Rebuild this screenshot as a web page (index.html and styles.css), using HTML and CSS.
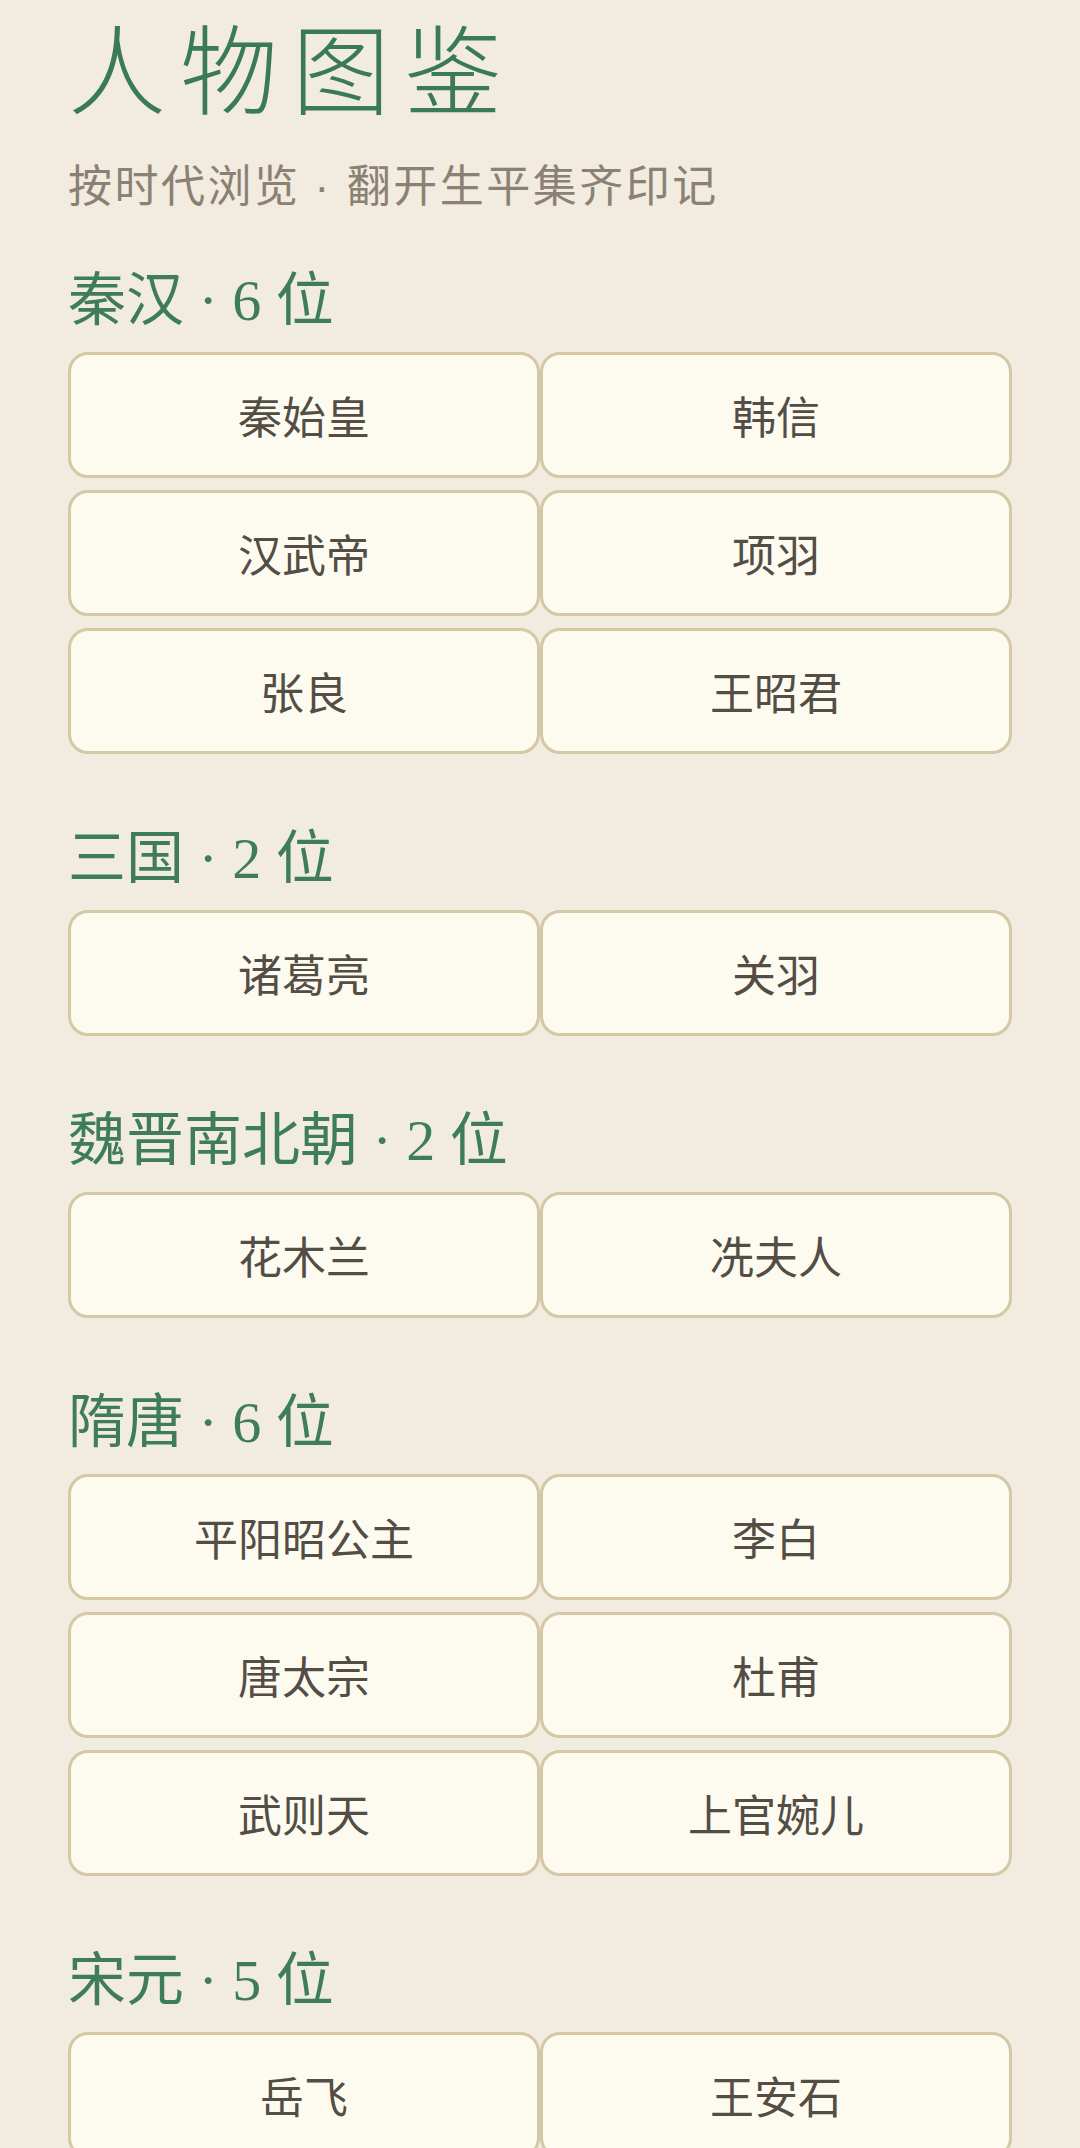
FILE: index.html
```html
<!DOCTYPE html>
<html lang="zh-CN">
<head>
<meta charset="utf-8">
<title>人物图鉴</title>
<link rel="stylesheet" href="styles.css">
</head>
<body>
<main class="page">
  <h1 class="title">人物图鉴</h1>
  <p class="subtitle">按时代浏览<span class="sep">·</span>翻开生平集齐印记</p>

  <section class="era">
    <h2 class="era-title">秦汉 · 6 位</h2>
    <div class="grid">
      <div class="card">秦始皇</div>
      <div class="card">韩信</div>
      <div class="card">汉武帝</div>
      <div class="card">项羽</div>
      <div class="card">张良</div>
      <div class="card">王昭君</div>
    </div>
  </section>

  <section class="era">
    <h2 class="era-title">三国 · 2 位</h2>
    <div class="grid">
      <div class="card">诸葛亮</div>
      <div class="card">关羽</div>
    </div>
  </section>

  <section class="era">
    <h2 class="era-title">魏晋南北朝 · 2 位</h2>
    <div class="grid">
      <div class="card">花木兰</div>
      <div class="card">冼夫人</div>
    </div>
  </section>

  <section class="era">
    <h2 class="era-title">隋唐 · 6 位</h2>
    <div class="grid">
      <div class="card">平阳昭公主</div>
      <div class="card">李白</div>
      <div class="card">唐太宗</div>
      <div class="card">杜甫</div>
      <div class="card">武则天</div>
      <div class="card">上官婉儿</div>
    </div>
  </section>

  <section class="era">
    <h2 class="era-title">宋元 · 5 位</h2>
    <div class="grid">
      <div class="card">岳飞</div>
      <div class="card">王安石</div>
    </div>
  </section>
</main>
</body>
</html>
```
FILE: styles.css
```css
html, body {
  margin: 0;
  padding: 0;
  background: #f1ebe0;
}

.page {
  padding: 25px 68px 0;
  font-family: "Noto Sans CJK SC", "Noto Sans", sans-serif;
}

.title {
  margin: 0;
  font-family: "Liberation Serif", "Noto Sans CJK SC", serif;
  font-size: 98px;
  line-height: 1;
  font-weight: 300;
  letter-spacing: 14px;
  color: #3b7a57;
}

.subtitle {
  margin: 38px 0 0;
  font-size: 44px;
  line-height: 1;
  letter-spacing: 2.5px;
  color: #8b8173;
}

.sep {
  font-family: "Liberation Sans", sans-serif;
  margin: 0 15px 0 14px;
}

.era {
  margin-top: 76px;
}

.subtitle + .era {
  margin-top: 63px;
}

.era-title {
  margin: 0 0 22px;
  font-family: "Liberation Serif", "Noto Sans CJK SC", serif;
  font-size: 58px;
  line-height: 1;
  font-weight: 400;
  color: #3f7d5a;
}

.grid {
  display: grid;
  grid-template-columns: 1fr 1fr;
  column-gap: 0;
  row-gap: 12px;
}

.card {
  height: 126px;
  box-sizing: border-box;
  border: 3px solid #d4c8a7;
  border-radius: 20px;
  background: #fdfbef;
  display: flex;
  align-items: center;
  justify-content: center;
  font-size: 44px;
  color: #534d45;
}
```
